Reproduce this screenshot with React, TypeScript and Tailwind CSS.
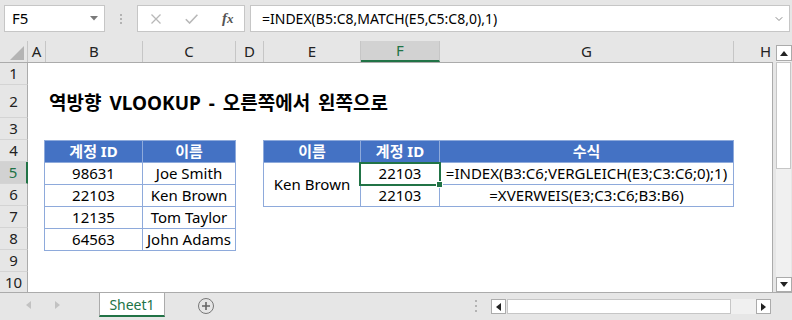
import { ChevronDown } from "lucide-react"

const cols = [
  { l: "A", w: "w-[18px]" },
  { l: "B", w: "w-[97px]" },
  { l: "C", w: "w-[93px]" },
  { l: "D", w: "w-[28px]" },
  { l: "E", w: "w-[97px]" },
  { l: "F", w: "w-[79px]", sel: true },
  { l: "G", w: "w-[294px]" },
  { l: "H", w: "w-[64px]" },
]

const rows = [
  { n: 1, h: "h-[22px]" },
  { n: 2, h: "h-[33px]" },
  { n: 3, h: "h-[22px]" },
  { n: 4, h: "h-[22px]" },
  { n: 5, h: "h-[22px]", sel: true },
  { n: 6, h: "h-[22px]" },
  { n: 7, h: "h-[22px]" },
  { n: 8, h: "h-[22px]" },
  { n: 9, h: "h-[22px]" },
  { n: 10, h: "h-[22px]" },
]

const accounts = [
  ["98631", "Joe Smith"],
  ["22103", "Ken Brown"],
  ["12135", "Tom Taylor"],
  ["64563", "John Adams"],
]

const FormulaBar = () => (
  <div className="flex h-[41px] items-start pl-[4px] pt-[5px]">
    <div className="flex h-[27px] w-[101px] items-center justify-between border border-[#c6c6c6] bg-white pl-[7px] pr-[6px] text-[15px]">
      <span>F5</span>
      <svg width="8" height="5">
        <polygon points="0,0 8,0 4,4.5" fill="#7a7a7a" />
      </svg>
    </div>
    <div className="flex h-[27px] w-[32px] flex-col items-center justify-center gap-[2px]">
      <div className="h-[2px] w-[2px] bg-[#b3b3b3]" />
      <div className="h-[2px] w-[2px] bg-[#b3b3b3]" />
      <div className="h-[2px] w-[2px] bg-[#b3b3b3]" />
    </div>
    <div className="flex h-[27px] w-[108px] items-center border border-[#c6c6c6] bg-white pl-[13px]">
      <svg width="10" height="10" className="shrink-0">
        <path d="M0.5 0.5 L9.5 9.5 M9.5 0.5 L0.5 9.5" stroke="#b8b8b8" strokeWidth="1.3" />
      </svg>
      <svg width="13" height="10" className="ml-[24px] shrink-0">
        <path d="M0.8 5.2 L4.6 9 L12.4 0.8" stroke="#b8b8b8" strokeWidth="1.6" fill="none" />
      </svg>
      <span className="ml-[24px] font-['Liberation_Serif',serif] text-[15px] font-bold italic text-[#555]">
        f<span className="text-[13px]">x</span>
      </span>
    </div>
    <div className="ml-[5px] flex h-[27px] w-[540px] items-center justify-between border border-[#c6c6c6] bg-white pl-[11px] pr-[4px] text-[14px]">
      <span>=INDEX(B5:C8,MATCH(E5,C5:C8,0),1)</span>
      <ChevronDown size={12} strokeWidth={2} className="text-[#8a8a8a]" />
    </div>
  </div>
)

const AccountTable = () => (
  <div className="grid grid-cols-[97px_92px] grid-rows-[repeat(5,21px)] gap-px bg-[#8eaadb] p-px text-[15px]">
    <div className="flex items-center justify-center bg-[#4472c4] font-bold text-white">계정 ID</div>
    <div className="flex items-center justify-center bg-[#4472c4] font-bold text-white">이름</div>
    {accounts.map(([id, name]) => (
      <>
        <div key={id} className="flex items-center justify-center bg-white">{id}</div>
        <div key={name} className="flex items-center justify-center whitespace-nowrap bg-white">{name}</div>
      </>
    ))}
  </div>
)

const LookupTable = () => (
  <div className="ml-[27px] grid grid-cols-[96px_78px_293px] grid-rows-[repeat(3,21px)] gap-px bg-[#8eaadb] p-px text-[15px]">
    <div className="flex items-center justify-center bg-[#4472c4] font-bold text-white">이름</div>
    <div className="flex items-center justify-center bg-[#4472c4] font-bold text-white">계정 ID</div>
    <div className="flex items-center justify-center bg-[#4472c4] font-bold text-white">수식</div>
    <div className="row-span-2 flex items-center justify-center bg-white">Ken Brown</div>
    <div className="relative flex items-center justify-center bg-white">
      22103
      <div className="absolute -left-[2px] -top-[1px] h-[24px] w-[82px] border-2 border-[#217346]" />
      <div className="absolute left-[75px] top-[18px] h-[7px] w-[7px] border border-white bg-[#217346]" />
    </div>
    <div className="flex items-center justify-center whitespace-nowrap bg-white">=INDEX(B3:C6;VERGLEICH(E3;C3:C6;0);1)</div>
    <div className="flex items-center justify-center bg-white">22103</div>
    <div className="flex items-center justify-center whitespace-nowrap bg-white">=XVERWEIS(E3;C3:C6;B3:B6)</div>
  </div>
)

const Sheet = () => (
  <div className="flex h-[251px]">
    <div className="flex w-[773px] flex-col">
      <div className="flex h-[22px] shrink-0 overflow-hidden border-b border-[#ababab] text-[15px] text-[#222]">
        <div className="flex w-[28px] shrink-0 items-end justify-end border-r border-[#c6c6c6] pb-[2px] pr-[3px]">
          <svg width="14" height="14">
            <polygon points="14,0 14,14 0,14" fill="#b4b4b4" />
          </svg>
        </div>
        {cols.map((c) => (
          <div
            key={c.l}
            className={`${c.w} flex shrink-0 items-center justify-center border-r border-[#c6c6c6] ${
              c.sel ? "border-b-2 border-b-[#217346] bg-[#d2d2d2] text-[#217346]" : ""
            }`}
          >
            {c.l}
          </div>
        ))}
      </div>
      <div className="flex min-h-0 flex-1">
        <div className="flex w-[28px] shrink-0 flex-col overflow-hidden text-[15px] text-[#222]">
          {rows.map((r) => (
            <div
              key={r.n}
              className={`${r.h} flex shrink-0 items-center justify-center border-b border-[#d4d4d4] ${
                r.sel ? "border-r-2 border-r-[#217346] bg-[#d2d2d2] text-[#217346]" : "border-r border-r-[#ababab]"
              }`}
            >
              {r.n}
            </div>
          ))}
        </div>
        <div className="flex-1 overflow-hidden border-r border-[#ababab] bg-white">
          <div className="h-[22px]" />
          <div className="flex h-[33px] items-center whitespace-nowrap pl-[21px] pt-[3px] text-[19px] font-bold [word-spacing:3px]">
            역방향 VLOOKUP - 오른쪽에서 왼쪽으로
          </div>
          <div className="h-[22px]" />
          <div className="flex items-start pl-[16px]">
            <AccountTable />
            <LookupTable />
          </div>
        </div>
      </div>
    </div>
    <div className="flex w-[19px] flex-col pb-0 pl-[3px] pt-[4px]">
      <div className="flex h-[16px] w-[16px] shrink-0 items-center justify-center border border-[#ababab] bg-white">
        <svg width="8" height="5">
          <polygon points="0,5 8,5 4,0" fill="#222" />
        </svg>
      </div>
      <div className="flex w-[15px] flex-1 flex-col bg-[#f0f0f0]">
        <div className="mt-px h-[107px] border border-[#c6c6c6] bg-white" />
      </div>
      <div className="flex h-[15px] w-[16px] shrink-0 items-center justify-center border border-[#ababab] bg-white">
        <svg width="8" height="5">
          <polygon points="0,0 8,0 4,5" fill="#222" />
        </svg>
      </div>
    </div>
  </div>
)

const TabBar = () => (
  <div className="flex h-[28px] items-start border-t border-[#ababab]">
    <div className="flex h-[24px] w-[99px] shrink-0 items-center gap-[24px] pl-[26px]">
      <svg width="5" height="8">
        <polygon points="5,0 5,8 0,4" fill="#c2c2c2" />
      </svg>
      <svg width="5" height="8">
        <polygon points="0,0 0,8 5,4" fill="#c2c2c2" />
      </svg>
    </div>
    <div className="flex h-[24px] w-[66px] shrink-0 items-center justify-center border-x border-b-2 border-x-[#ababab] border-b-[#217346] bg-white text-[14px] text-[#217346]">
      Sheet1
    </div>
    <div className="ml-[33px] mt-[5px] flex h-[16px] w-[16px] shrink-0 items-center justify-center rounded-full border-[1.5px] border-[#777]">
      <svg width="8" height="8">
        <path d="M4 0 V8 M0 4 H8" stroke="#666" strokeWidth="1.6" />
      </svg>
    </div>
    <div className="ml-[261px] mt-[7px] flex shrink-0 flex-col gap-[3px]">
      <div className="h-[2px] w-[2px] bg-[#b3b3b3]" />
      <div className="h-[2px] w-[2px] bg-[#b3b3b3]" />
      <div className="h-[2px] w-[2px] bg-[#b3b3b3]" />
    </div>
    <div className="ml-[14px] mt-[6px] flex h-[15px] shrink-0">
      <div className="flex w-[15px] items-center justify-center border border-[#ababab] bg-white">
        <svg width="5" height="8">
          <polygon points="5,0 5,8 0,4" fill="#222" />
        </svg>
      </div>
      <div className="ml-px w-[224px] border border-[#c6c6c6] bg-white" />
      <div className="w-[25px] bg-[#f0f0f0]" />
      <div className="flex w-[15px] items-center justify-center border border-[#ababab] bg-white">
        <svg width="5" height="8">
          <polygon points="0,0 0,8 5,4" fill="#222" />
        </svg>
      </div>
    </div>
  </div>
)

export default function App() {
  return (
    <div className="flex h-[320px] w-[792px] flex-col overflow-hidden bg-[#e6e6e6] font-['Noto_Sans','Noto_Sans_CJK_KR',sans-serif] text-black">
      <FormulaBar />
      <Sheet />
      <TabBar />
    </div>
  )
}
